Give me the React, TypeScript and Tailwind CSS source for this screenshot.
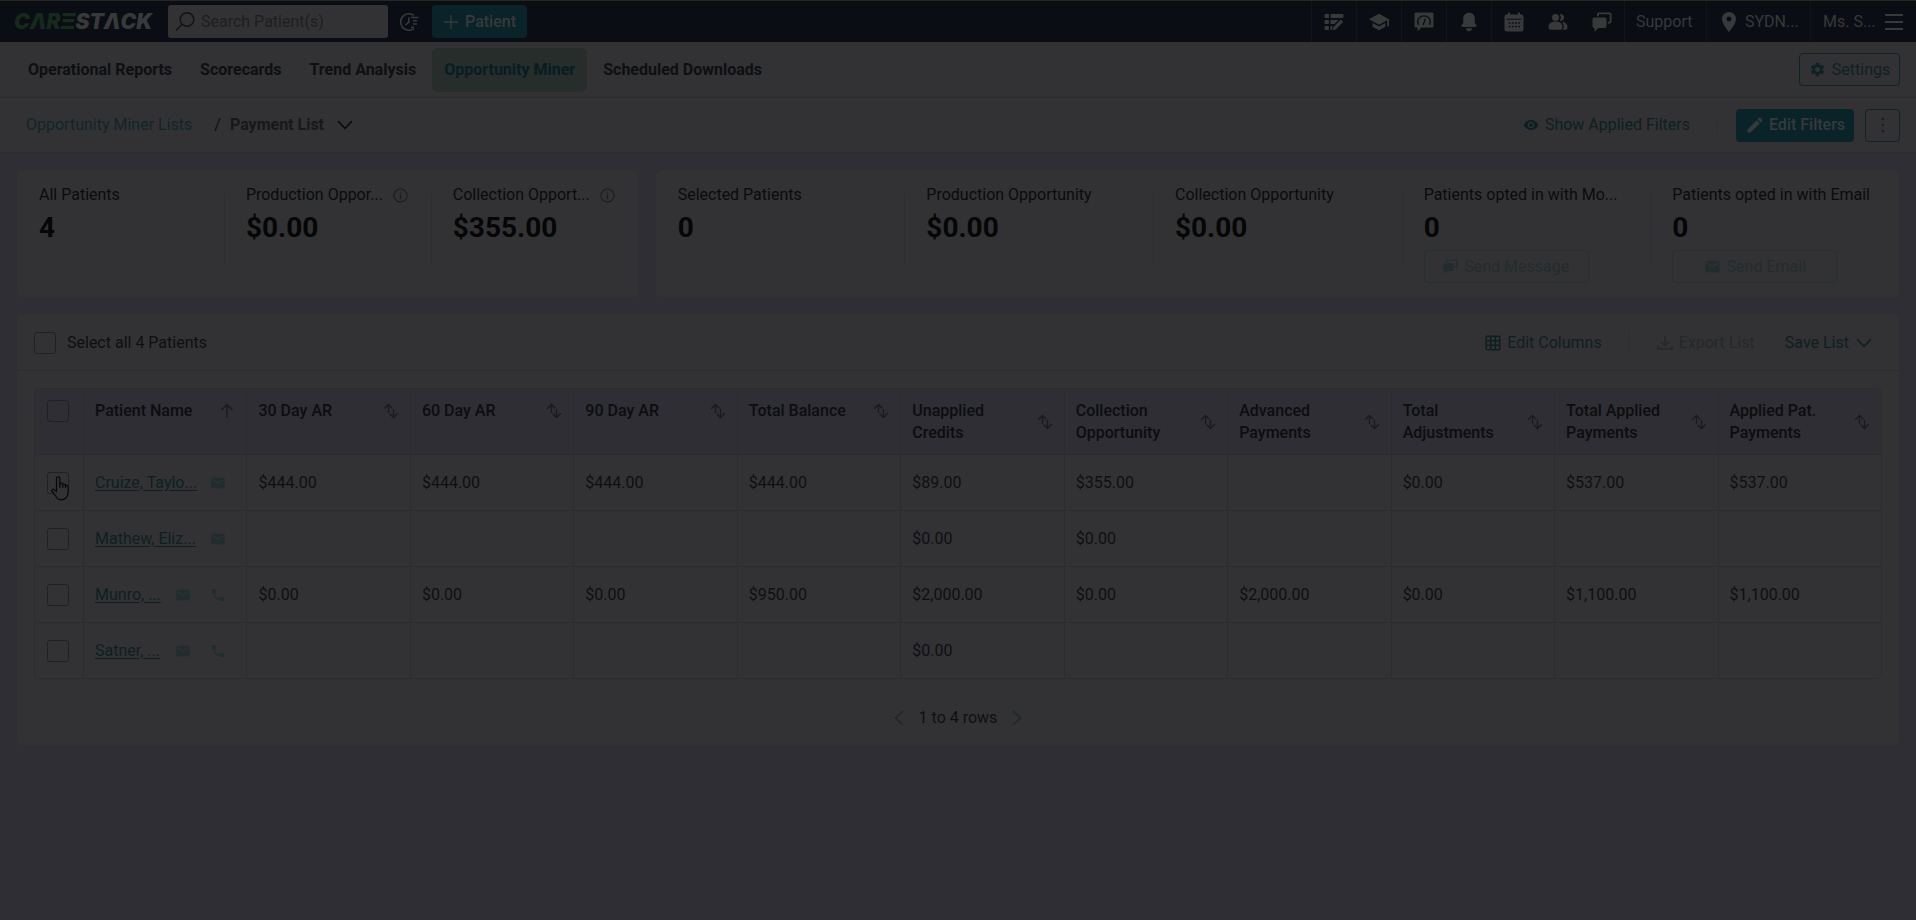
import type { ReactNode } from 'react'
import { MdEdit, MdMail, MdPhone, MdPlace, MdSchool, MdSettings, MdVisibility } from 'react-icons/md'

type Patient = {
  name: string
  phone?: boolean
  values: string[]
}

const tabs = ['Operational Reports', 'Scorecards', 'Trend Analysis', 'Opportunity Miner', 'Scheduled Downloads']

const columns = [
  '30 Day AR',
  '60 Day AR',
  '90 Day AR',
  'Total Balance',
  'Unapplied Credits',
  'Collection Opportunity',
  'Advanced Payments',
  'Total Adjustments',
  'Total Applied Payments',
  'Applied Pat. Payments',
]

const patients: Patient[] = [
  {
    name: 'Cruize, Taylo...',
    values: ['$444.00', '$444.00', '$444.00', '$444.00', '$89.00', '$355.00', '', '$0.00', '$537.00', '$537.00'],
  },
  { name: 'Mathew, Eliz...', values: ['', '', '', '', '$0.00', '$0.00', '', '', '', ''] },
  {
    name: 'Munro, ...',
    phone: true,
    values: ['$0.00', '$0.00', '$0.00', '$950.00', '$2,000.00', '$0.00', '$2,000.00', '$0.00', '$1,100.00', '$1,100.00'],
  },
  { name: 'Satner, ...', phone: true, values: ['', '', '', '', '$0.00', '', '', '', '', ''] },
]

function TaskIcon() {
  return (
    <svg viewBox="0 0 20 20" className="w-5 h-5" fill="currentColor">
      <rect x="0.5" y="2" width="4.5" height="4" rx="1" />
      <rect x="0.5" y="8" width="4.5" height="4" rx="1" />
      <rect x="0.5" y="14" width="4.5" height="4" rx="1" />
      <rect x="6.5" y="2" width="13" height="4" rx="1" />
      <path d="M7 8h7.5l-4 4H7a.6.6 0 0 1-.6-.6V8.600A.6.6 0 0 1 7 8zM7 14h1.600L7.800 18H7a.6.6 0 0 1-.6-.6v-2.800A.6.6 0 0 1 7 14z" />
      <path d="M16.800 7.600l2.400 2.300-7.600 7.600-2.900.7.6-3z" />
    </svg>
  )
}

function GaugeIcon() {
  return (
    <svg viewBox="0 0 20 20" className="w-5 h-5">
      <path fill="currentColor" d="M2 .5h16A1.500 1.500 0 0 1 19.500 2v12a1.500 1.500 0 0 1-1.500 1.500H7.500L3.500 19.500v-4H2A1.500 1.500 0 0 1 .5 14V2A1.500 1.500 0 0 1 2 .5z" />
      <path fill="none" stroke="#0b0d14" strokeWidth="1.300" strokeLinecap="round" d="M4.200 12.500C2.500 8 5.500 3.800 10 3.800s7.500 4.200 5.800 8.700M9.300 12.500l2-5.500" />
    </svg>
  )
}

function BellIcon() {
  return (
    <svg viewBox="0 0 20 20" className="w-5 h-5" fill="currentColor">
      <path d="M10 .8c3.600 0 5.800 2.600 5.800 6v4.400l1.500 1.700c.7.9.2 2-1 2H3.700c-1.200 0-1.700-1.100-1-2l1.500-1.700V6.800c0-3.400 2.200-6 5.800-6z" />
      <path d="M6.800 16.300h6.400c-.3 1.700-1.500 2.900-3.200 2.900s-2.900-1.200-3.200-2.900z" />
    </svg>
  )
}

function CalendarIcon() {
  return (
    <svg viewBox="0 0 20 20" className="w-5 h-5">
      <path fill="currentColor" d="M4 .5h2v2h8v-2h2v2h1.500a2 2 0 0 1 2 2v13a2 2 0 0 1-2 2h-15a2 2 0 0 1-2-2v-13a2 2 0 0 1 2-2H4z" />
      <path stroke="#0b0d14" strokeWidth="1" d="M2.500 7.200h15" />
      <path stroke="#0b0d14" strokeWidth="1.700" strokeDasharray="1.700 1.500" d="M4.700 11h11.500M4.700 14.500h11.500" />
    </svg>
  )
}

function PeopleIcon() {
  return (
    <svg viewBox="0 0 20 20" className="w-5 h-5" fill="currentColor">
      <circle cx="7.500" cy="5.500" r="3.500" />
      <path d="M.5 15c0-3.300 2.600-5.500 7-5.500s7 2.200 7 5.500c0 2-1 2.800-2.500 2.800H3C1.500 17.800.5 17 .5 15z" />
      <path d="M11.500 2.200a3.500 3.500 0 1 1 0 6.600 4.600 4.600 0 0 0 0-6.600zM13.800 9.700c3.700.4 5.700 2.500 5.700 5.300 0 2-.8 2.800-2.200 2.800h-2.600c.8-.7 1.100-1.600 1.100-2.800 0-2.200-.7-4-2-5.300z" />
    </svg>
  )
}

function ChatIcon({ className }: { className: string }) {
  return (
    <svg viewBox="0 0 20 20" className={className} fill="currentColor">
      <path d="M2.200 5.500h10.600a1.700 1.700 0 0 1 1.700 1.700v7.100a1.700 1.700 0 0 1-1.700 1.700H6.500L2.500 19.700V16h-.3a1.700 1.700 0 0 1-1.700-1.700V7.200a1.700 1.700 0 0 1 1.700-1.700z" />
      <path d="M5 4.200V2.200A1.700 1.700 0 0 1 6.700.5h11.100a1.700 1.700 0 0 1 1.700 1.700v7.600a1.700 1.700 0 0 1-1.700 1.700h-2V9.700h1.900V2.300H6.900v1.900z" />
    </svg>
  )
}

function RecentIcon() {
  return (
    <svg viewBox="0 0 20 20" className="w-5 h-5" fill="none" stroke="currentColor" strokeWidth="1.600">
      <path d="M15 3.400A8.300 8.300 0 1 0 15 16.600" />
      <path d="M9.800 5.500v4.700L6.500 13M12 5.500h7.500M14 8.800h4M14 12h4M12 15.200h3" />
    </svg>
  )
}

function ChevronIcon({ className }: { className: string }) {
  return (
    <svg viewBox="0 0 16 16" className={className} fill="none" stroke="currentColor" strokeWidth="1.500" strokeLinecap="round">
      <path d="M1.500 4.500L8 11.500l6.500-7" />
    </svg>
  )
}

function SortIcon() {
  return (
    <svg viewBox="0 0 16 16" className="w-4 h-4" fill="none" stroke="currentColor" strokeWidth="1.300">
      <path d="M5.500 10V1.500M1.200 5.800l4.300-4.300 3.800 3.800M10.500 6v8.500M6.700 10.700l3.800 3.800 4.300-4.300" />
    </svg>
  )
}

function Checkbox({ id, label }: { id: string; label?: string }) {
  return (
    <input
      id={id}
      type="checkbox"
      aria-label={label}
      className="block appearance-none w-[22px] h-[22px] shrink-0 rounded-[3px] border border-[#202122]"
    />
  )
}

function TopBar() {
  const icons: [string, ReactNode][] = [
    ['Tasks', <TaskIcon />],
    ['Learning', <MdSchool className="w-[22px] h-[22px]" />],
    ['Performance', <GaugeIcon />],
    ['Notifications', <BellIcon />],
  ]
  const plain: [string, ReactNode][] = [
    ['Calendar', <CalendarIcon />],
    ['Patients', <PeopleIcon />],
    ['Messages', <ChatIcon className="w-5 h-5" />],
  ]
  return (
    <header className="flex items-stretch h-[42px] bg-[#0b0d14] border-t border-[#252721] text-[#38393a]">
      <a href="#" aria-label="CareStack" className="flex items-center w-[153px] pl-[14px] mr-[15px] font-[Inter] font-black italic text-[21px] leading-none whitespace-nowrap">
        <span className="text-[#16291c]">CΛRΞ</span>
        <span>STΛCK</span>
      </a>
      <div className="flex items-center gap-[6px] my-1 w-[220px] h-[33px] px-[7px] rounded-[3px] bg-[#323234]">
        <svg viewBox="0 0 20 20" className="w-5 h-5 shrink-0 text-[#111214]" fill="none" stroke="currentColor" strokeWidth="1.500">
          <circle cx="12" cy="7.500" r="6.800" />
          <path d="M7.200 12.300L1 18.500" />
        </svg>
        <input
          type="text"
          aria-label="Search Patient(s)"
          placeholder="Search Patient(s)"
          className="w-full min-w-0 bg-transparent outline-none placeholder:text-[#1d1e20]"
        />
      </div>
      <button type="button" aria-label="Recent patients" className="pl-[11px] pr-[13px]">
        <RecentIcon />
      </button>
      <button type="button" className="flex items-center gap-[6px] my-1 h-[33px] px-[11px] rounded-[4px] bg-[#092328]">
        <svg viewBox="0 0 16 16" className="w-4 h-4" stroke="currentColor" strokeWidth="1.300">
          <path d="M8 1v14M1 8h14" />
        </svg>
        <span className="font-medium">Patient</span>
      </button>
      <nav className="flex items-stretch ml-auto">
        {icons.map(([label, icon]) => (
          <button key={label} type="button" aria-label={label} className="flex items-center justify-center w-[45px] border-l border-[#121419]">
            {icon}
          </button>
        ))}
        <div className="flex border-l border-[#121419]">
          {plain.map(([label, icon]) => (
            <button key={label} type="button" aria-label={label} className="flex items-center justify-center w-11">
              {icon}
            </button>
          ))}
        </div>
        <a href="#" className="flex items-center pl-[11px] w-[82px] border-l border-[#121419]">Support</a>
        <button type="button" className="flex items-center gap-1 w-[104px] pl-[10px] border-l border-[#121419]">
          <MdPlace className="w-6 h-6" />
          SYDN...
        </button>
        <button type="button" className="flex items-center justify-between w-[106px] pl-3 pr-[13px] border-l border-[#121419]">
          Ms. S...
          <svg viewBox="0 0 18 18" className="w-[18px] h-[18px]" stroke="currentColor" strokeWidth="1.800">
            <path d="M0 2h18M0 9h18M0 16h18" />
          </svg>
        </button>
      </nav>
    </header>
  )
}

function Stat({ label, value, info, children }: { label: string; value: string; info?: boolean; children?: ReactNode }) {
  return (
    <div className="flex min-w-0 group">
      <div className="w-px h-[72px] mt-[22px] bg-[#2c2d2e] group-first:bg-transparent" />
      <div className="min-w-0 pl-[21px] pt-[14px]">
        <div className="flex items-center gap-[10px] leading-5 whitespace-nowrap text-[#0a0b0c]">
          {label}
          {info && (
            <svg viewBox="0 0 16 16" className="w-[15px] h-[15px] text-[#1a1c1d]" fill="none" stroke="currentColor" strokeWidth="1.200">
              <circle cx="8" cy="8" r="7" />
              <path d="M8 6.800V12M8 4v1.500" />
            </svg>
          )}
        </div>
        <div className="mt-2 mb-[7px] text-[28px] leading-[30px] font-bold text-[#050606]">{value}</div>
        {children}
      </div>
    </div>
  )
}

function SendButton({ children }: { children: ReactNode }) {
  return (
    <button
      type="button"
      disabled
      className="flex items-center justify-center gap-[6px] w-[165px] h-[33px] rounded-[4px] border border-[#243032] text-[#232c2d]"
    >
      {children}
    </button>
  )
}

function PatientTable() {
  return (
    <table className="w-full table-fixed border-separate border-spacing-0 text-left rounded-[6px] overflow-hidden border-t border-l border-[#2c2d2b]">
      <thead className="bg-[#2f2e34] text-[#0c0d0f]">
        <tr className="h-[66px] align-top leading-[22px]">
          <th className="w-[49px] pt-[11px] pl-3 border-r border-b border-[#2c2d2b]">
            <Checkbox id="select-page" label="Select page" />
          </th>
          <th className="pt-[11px] px-[11px] font-medium border-r border-b border-[#2c2d2b]">
            <button type="button" className="flex items-center justify-between w-full">
              Patient Name
              <svg viewBox="0 0 16 16" className="w-4 h-4 text-[#191a1c]" fill="none" stroke="currentColor" strokeWidth="1.300">
                <path d="M8 15V1.500M2.500 7L8 1.500 13.500 7" />
              </svg>
            </button>
          </th>
          {columns.map((column) => (
            <th key={column} className="pt-[11px] px-[11px] font-medium border-r border-b border-[#2c2d2b]">
              <button type="button" className="flex items-center justify-between w-full text-left">
                <span className="max-w-[110px]">{column}</span>
                <span className="text-[#191a1c]">
                  <SortIcon />
                </span>
              </button>
            </th>
          ))}
        </tr>
      </thead>
      <tbody>
        {patients.map((patient, index) => (
          <tr key={patient.name} className="h-14">
            <td className="pl-3 border-r border-b border-[#2c2d2b]">
              <div className="relative">
                <Checkbox id={`patient-${index}`} label={patient.name} />
                {index === 0 && (
                  <svg viewBox="0 0 18 25" className="absolute left-1 top-1 w-[18px] h-[25px]" fill="#323234" stroke="#060708" strokeWidth="1.200" strokeLinejoin="round">
                    <path d="M5.500 14V2.500a1.700 1.700 0 0 1 3.400 0V9l0-1.500c1.300-1 2.900-.5 2.900.8 1.300-.6 2.600-.2 2.700 1.100 1.500-.4 2.700.3 2.700 1.700v5c0 4-2.500 7.700-6.700 7.700-3.200 0-4.500-1.300-5.800-3.600L1 15.200c-.8-1.500 1-2.600 2.200-1.600l2.300 2z" />
                    <path fill="none" d="M8.900 8v4M11.800 8.500V12M14.500 9.500V12" />
                  </svg>
                )}
              </div>
            </td>
            <td className="pl-[11px] pr-5 border-r border-b border-[#2c2d2b]">
              <div className="flex items-center justify-between">
                <a href="#" className="whitespace-nowrap underline underline-offset-2 text-[#0e1f20]">
                  {patient.name}
                </a>
                <span className="flex gap-[19px] text-[#212c2d]">
                  <MdMail aria-label="Email" className="w-4 h-4" />
                  {patient.phone && <MdPhone aria-label="Phone" className="w-4 h-4" />}
                </span>
              </div>
            </td>
            {patient.values.map((value, i) => (
              <td key={columns[i]} className="px-[11px] border-r border-b border-[#2c2d2b]">
                {value}
              </td>
            ))}
          </tr>
        ))}
      </tbody>
    </table>
  )
}

export default function App() {
  return (
    <div className="min-h-screen bg-[#2f2e34] font-[Roboto,sans-serif] text-base text-[#0e0f11]">
      <TopBar />

      <div className="flex items-center justify-between h-14 px-4 bg-[#323234] border-b border-[#2b2c2d]">
        <nav className="flex items-center gap-1">
          {tabs.map((tab) => (
            <a
              key={tab}
              href="#"
              className={`flex items-center h-11 px-3 rounded-[6px] font-bold whitespace-nowrap ${
                tab === 'Opportunity Miner' ? 'bg-[#262d2a] text-[#081c23]' : ''
              }`}
            >
              {tab}
            </a>
          ))}
        </nav>
        <button type="button" className="flex items-center justify-center gap-[6px] w-[101px] h-[33px] rounded-[4px] border border-[#0e2326] text-[#0f2124]">
          <MdSettings className="w-[17px] h-[17px]" />
          Settings
        </button>
      </div>

      <div className="flex items-center h-[55px] pl-[26px] pr-4 bg-[#323234] border-b border-[#2b2c2d]">
        <a href="#" className="text-[#122427]">Opportunity Miner Lists</a>
        <span className="ml-[22px] mr-[9px]">/</span>
        <button type="button" className="flex items-center gap-[13px] font-bold text-[#17181b]">
          Payment List
          <ChevronIcon className="w-4 h-4 text-[#060708]" />
        </button>
        <div className="flex items-center ml-auto">
          <button type="button" className="flex items-center gap-[6px] text-[#0e1f20]">
            <MdVisibility className="w-4 h-4" />
            Show Applied Filters
          </button>
          <div className="w-px h-[14px] ml-[27px] mr-[18px] bg-[#2c2d2e]" />
          <button type="button" className="flex items-center justify-center gap-1 w-[118px] h-[33px] rounded-[4px] bg-[#092328] text-[#38393a] font-medium">
            <MdEdit className="w-5 h-5" />
            Edit Filters
          </button>
          <button type="button" aria-label="More" className="flex items-center justify-center w-[35px] h-[33px] ml-[11px] rounded-[4px] border border-[#0e2326] text-[#0f2124]">
            <svg viewBox="0 0 4 16" className="w-1 h-4" fill="currentColor">
              <circle cx="2" cy="2" r="1.300" />
              <circle cx="2" cy="8" r="1.300" />
              <circle cx="2" cy="14" r="1.300" />
            </svg>
          </button>
        </div>
      </div>

      <main className="px-4 pt-[17px]">
        <div className="grid grid-cols-[1fr_2fr] gap-4">
          <section className="grid grid-cols-3 h-[128px] rounded-[6px] bg-[#323234] border border-[#2e2f2f]">
            <Stat label="All Patients" value="4" />
            <Stat label="Production Oppor..." value="$0.00" info />
            <Stat label="Collection Opport..." value="$355.00" info />
          </section>
          <section className="grid grid-cols-5 h-[128px] rounded-[6px] bg-[#323234] border border-[#2e2f2f]">
            <Stat label="Selected Patients" value="0" />
            <Stat label="Production Opportunity" value="$0.00" />
            <Stat label="Collection Opportunity" value="$0.00" />
            <Stat label="Patients opted in with Mo..." value="0">
              <SendButton>
                <ChatIcon className="w-[15px] h-[15px]" />
                Send Message
              </SendButton>
            </Stat>
            <Stat label="Patients opted in with Email" value="0">
              <SendButton>
                <MdMail className="w-[17px] h-[17px]" />
                Send Email
              </SendButton>
            </Stat>
          </section>
        </div>

        <section className="mt-4 rounded-[6px] bg-[#323234] border border-[#2e2f2f]">
          <div className="flex items-center h-14 pl-[17px] pr-[27px] border-b border-[#2b2c2b]">
            <Checkbox id="select-all" />
            <label htmlFor="select-all" className="ml-[11px]">
              Select all 4 Patients
            </label>
            <div className="flex items-center ml-auto text-[#0e1f20]">
              <button type="button" className="flex items-center gap-[6px]">
                <svg viewBox="0 0 16 16" className="w-4 h-4" fill="none" stroke="currentColor" strokeWidth="1.500">
                  <rect x="1.200" y="1.200" width="13.600" height="13.600" rx="1" />
                  <path d="M1 5.700h14M1 10.300h14M5.700 1v14M10.300 1v14" />
                </svg>
                Edit Columns
              </button>
              <div className="w-px h-[22px] mx-[27px] bg-[#2c2d2e]" />
              <button type="button" disabled className="flex items-center gap-[6px] text-[#25282a]">
                <svg viewBox="0 0 16 16" className="w-4 h-4" fill="none" stroke="currentColor" strokeWidth="1.500">
                  <path d="M8 1v9.500M4 6.800l4 3.900 4-3.900M1 10.500V14h14v-3.500" />
                </svg>
                Export List
              </button>
              <button type="button" className="flex items-center gap-[7px] ml-[30px]">
                Save List
                <ChevronIcon className="w-4 h-4" />
              </button>
            </div>
          </div>

          <div className="px-[17px] pt-[17px]">
            <PatientTable />
          </div>

          <div className="flex items-center justify-center gap-3 h-[66px] pt-[11px]">
            <button type="button" aria-label="Previous" className="text-[#1c2728]">
              <ChevronIcon className="w-4 h-4 rotate-90" />
            </button>
            <span>1 to 4 rows</span>
            <button type="button" aria-label="Next" className="text-[#1c2728]">
              <ChevronIcon className="w-4 h-4 -rotate-90" />
            </button>
          </div>
        </section>
      </main>
    </div>
  )
}
